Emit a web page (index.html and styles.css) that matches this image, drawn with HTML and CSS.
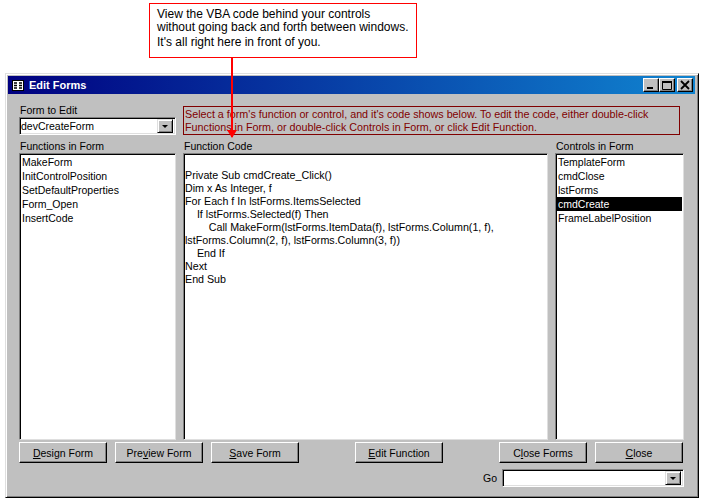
FILE: index.html
```html
<!DOCTYPE html>
<html lang="en">
<head>
<meta charset="utf-8">
<title>Edit Forms</title>
<link rel="stylesheet" href="styles.css">
</head>
<body>
<div class="callout">
  <p class="callout-line">View the VBA code behind your controls</p>
  <p class="callout-line">without going back and forth between windows.</p>
  <p class="callout-line callout-last">It's all right here in front of you.</p>
</div>
<svg class="arrow" width="12" height="86" viewBox="0 0 12 86">
  <path d="M6 0V80" stroke="#f00" stroke-width="2" fill="none"/>
  <path d="M1 73H11L6 81Z" fill="#f00"/>
</svg>
<main class="window">
  <header class="titlebar">
    <svg class="app-icon" width="12" height="11" viewBox="0 0 12 11">
      <rect x="0.5" y="0.5" width="11" height="10" fill="#fff" stroke="#000"/>
      <path d="M2 3H5M7 3H10M2 5.500H5M7 5.500H10M2 8H5M7 8H10" stroke="#000" stroke-width="1.300"/>
    </svg>
    <span class="title">Edit Forms</span>
    <div class="caption-buttons">
      <button class="cap-btn"><svg width="12" height="10" viewBox="0 0 12 10"><rect x="2" y="7" width="6" height="2" fill="#000"/></svg></button>
      <button class="cap-btn"><svg width="12" height="10" viewBox="0 0 12 10"><path d="M1.500 1.500H10.500V9.500H1.500Z" fill="none" stroke="#000"/><rect x="1" y="1" width="10" height="2" fill="#000"/></svg></button>
      <button class="cap-btn cap-close"><svg width="12" height="10" viewBox="0 0 12 10"><path d="M2 1L10 9M10 1L2 9" stroke="#000" stroke-width="1.800"/></svg></button>
    </div>
  </header>
  <div class="content">
    <div class="top-row">
      <div class="form-pick">
        <label class="label">Form to Edit</label>
        <div class="combo">
          <span class="combo-text">devCreateForm</span>
          <span class="drop"><span class="drop-arrow"></span></span>
        </div>
      </div>
      <p class="hint">Select a form's function or control, and it's code shows below. To edit the code, either double-click Functions in Form, or double-click Controls in Form, or click Edit Function.</p>
    </div>
    <div class="panes">
      <section class="pane">
        <h2 class="label">Functions in Form</h2>
        <ul class="list">
          <li class="item">MakeForm</li>
          <li class="item">InitControlPosition</li>
          <li class="item">SetDefaultProperties</li>
          <li class="item">Form_Open</li>
          <li class="item">InsertCode</li>
        </ul>
      </section>
      <section class="pane">
        <h2 class="label">Function Code</h2>
        <pre class="code">

Private Sub cmdCreate_Click()
Dim x As Integer, f
For Each f In lstForms.ItemsSelected
    If lstForms.Selected(f) Then
        Call MakeForm(lstForms.ItemData(f), lstForms.Column(1, f),
lstForms.Column(2, f), lstForms.Column(3, f))
    End If
Next
End Sub</pre>
      </section>
      <section class="pane">
        <h2 class="label">Controls in Form</h2>
        <ul class="list">
          <li class="item">TemplateForm</li>
          <li class="item">cmdClose</li>
          <li class="item">lstForms</li>
          <li class="item selected">cmdCreate</li>
          <li class="item">FrameLabelPosition</li>
        </ul>
      </section>
    </div>
    <div class="buttons">
      <button class="btn"><u>D</u>esign Form</button>
      <button class="btn">Pre<u>v</u>iew Form</button>
      <button class="btn"><u>S</u>ave Form</button>
      <button class="btn btn-edit"><u>E</u>dit Function</button>
      <button class="btn btn-closeforms">C<u>l</u>ose Forms</button>
      <button class="btn"><u>C</u>lose</button>
    </div>
    <div class="go-row">
      <label class="go-label">Go</label>
      <div class="combo combo-go">
        <span class="combo-text"></span>
        <span class="drop"><span class="drop-arrow"></span></span>
      </div>
    </div>
  </div>
</main>
</body>
</html>
```
FILE: styles.css
```css
* { box-sizing: border-box; }
html, body { margin: 0; padding: 0; }
body {
  position: relative;
  width: 704px;
  height: 501px;
  background: #fff;
  overflow: hidden;
  font-family: "Liberation Sans", Arial, sans-serif;
  font-size: 10.5px;
  color: #000;
}
.callout {
  position: absolute;
  left: 149px;
  top: 3px;
  width: 268px;
  height: 55px;
  border: 1px solid #f00;
  padding: 4px 7px;
  font-size: 12px;
  background: #fff;
}
.callout-line { margin: 0; height: 13px; line-height: 13px; white-space: nowrap; }
.callout-last { margin-top: 2px; }
.arrow { position: absolute; left: 226px; top: 57px; z-index: 2; }
.window {
  position: absolute;
  left: 5px;
  top: 73px;
  width: 694px;
  height: 425px;
  background: #c0c0c0;
  border: 1px solid;
  border-color: #dfdfdf #000 #000 #dfdfdf;
  box-shadow: inset 1px 1px #fff, inset -1px -1px #808080;
  padding: 2px 3px 3px 2px;
}
.titlebar {
  display: flex;
  align-items: center;
  height: 18px;
  background: linear-gradient(90deg, #000080, #1084d0);
  padding: 0 2px 0 4px;
  color: #fff;
}
.app-icon { flex: none; margin-right: 5px; }
.title { font-weight: bold; font-size: 11px; }
.caption-buttons { margin-left: auto; display: flex; }
.cap-btn {
  width: 16px;
  height: 14px;
  padding: 0;
  display: flex;
  align-items: center;
  justify-content: center;
  background: #c0c0c0;
  border: 1px solid;
  border-color: #fff #000 #000 #fff;
  box-shadow: inset -1px -1px #808080;
}
.cap-close { margin-left: 2px; }
.content { padding: 9px 0 0 11px; }
.top-row { display: flex; gap: 7px; height: 37px; }
.form-pick { width: 157px; padding-top: 1px; }
.label {
  display: block;
  margin: 0;
  font-size: 10.5px;
  font-weight: normal;
  line-height: 13px;
  height: 13px;
  padding-left: 1px;
  white-space: nowrap;
}
.combo {
  display: flex;
  align-items: center;
  height: 18px;
  width: 157px;
  background: #fff;
  border: 1px solid;
  border-color: #808080 #fff #fff #808080;
  box-shadow: inset 1px 1px #000, inset -1px -1px #dfdfdf;
  padding: 2px 2px 2px 1px;
}
.combo-text { flex: 1; line-height: 14px; }
.drop {
  flex: none;
  width: 16px;
  height: 14px;
  background: #c0c0c0;
  border: 1px solid;
  border-color: #dfdfdf #000 #000 #dfdfdf;
  box-shadow: inset 1px 1px #fff, inset -1px -1px #808080;
  display: flex;
  align-items: center;
  justify-content: center;
}
.drop-arrow {
  width: 0;
  height: 0;
  border-left: 3px solid transparent;
  border-right: 3px solid transparent;
  border-top: 3px solid #000;
}
.hint {
  margin: 3px 0 0;
  width: 497px;
  height: 29px;
  border: 1px solid #800000;
  color: #800000;
  padding: 1px;
  line-height: 13px;
  font-size: 10.75px;
}
.panes {
  display: grid;
  grid-template-columns: 157px 365px 129px;
  gap: 7px;
  height: 300px;
}
.pane { display: flex; flex-direction: column; }
.list, .code {
  flex: 1;
  margin: 0;
  padding: 1px;
  list-style: none;
  background: #fff;
  border: 1px solid;
  border-color: #808080 #dfdfdf #dfdfdf #808080;
  box-shadow: inset 1px 1px #000;
}
.item { height: 14px; line-height: 14px; padding-left: 1px; white-space: nowrap; }
.selected { background: #000; color: #fff; }
.code {
  font-family: inherit;
  font-size: 10.7px;
  line-height: 13px;
  padding: 2px 1px 2px 1px;
  white-space: pre;
}
.buttons { display: flex; gap: 8px; padding-top: 2px; height: 26px; }
.btn {
  width: 88px;
  height: 21px;
  padding: 0;
  font-family: inherit;
  font-size: 10.5px;
  color: #000;
  background: #c0c0c0;
  border: 1px solid;
  border-color: #fff #000 #000 #fff;
  box-shadow: inset -1px -1px #808080;
}
.btn-edit { margin-left: 48px; }
.btn-closeforms { margin-left: 48px; }
.go-row {
  display: flex;
  align-items: center;
  justify-content: flex-end;
  gap: 5px;
  width: 665px;
  height: 18px;
  margin-top: 3px;
}
.go-label { line-height: 13px; }
.combo-go { width: 182px; }
```
